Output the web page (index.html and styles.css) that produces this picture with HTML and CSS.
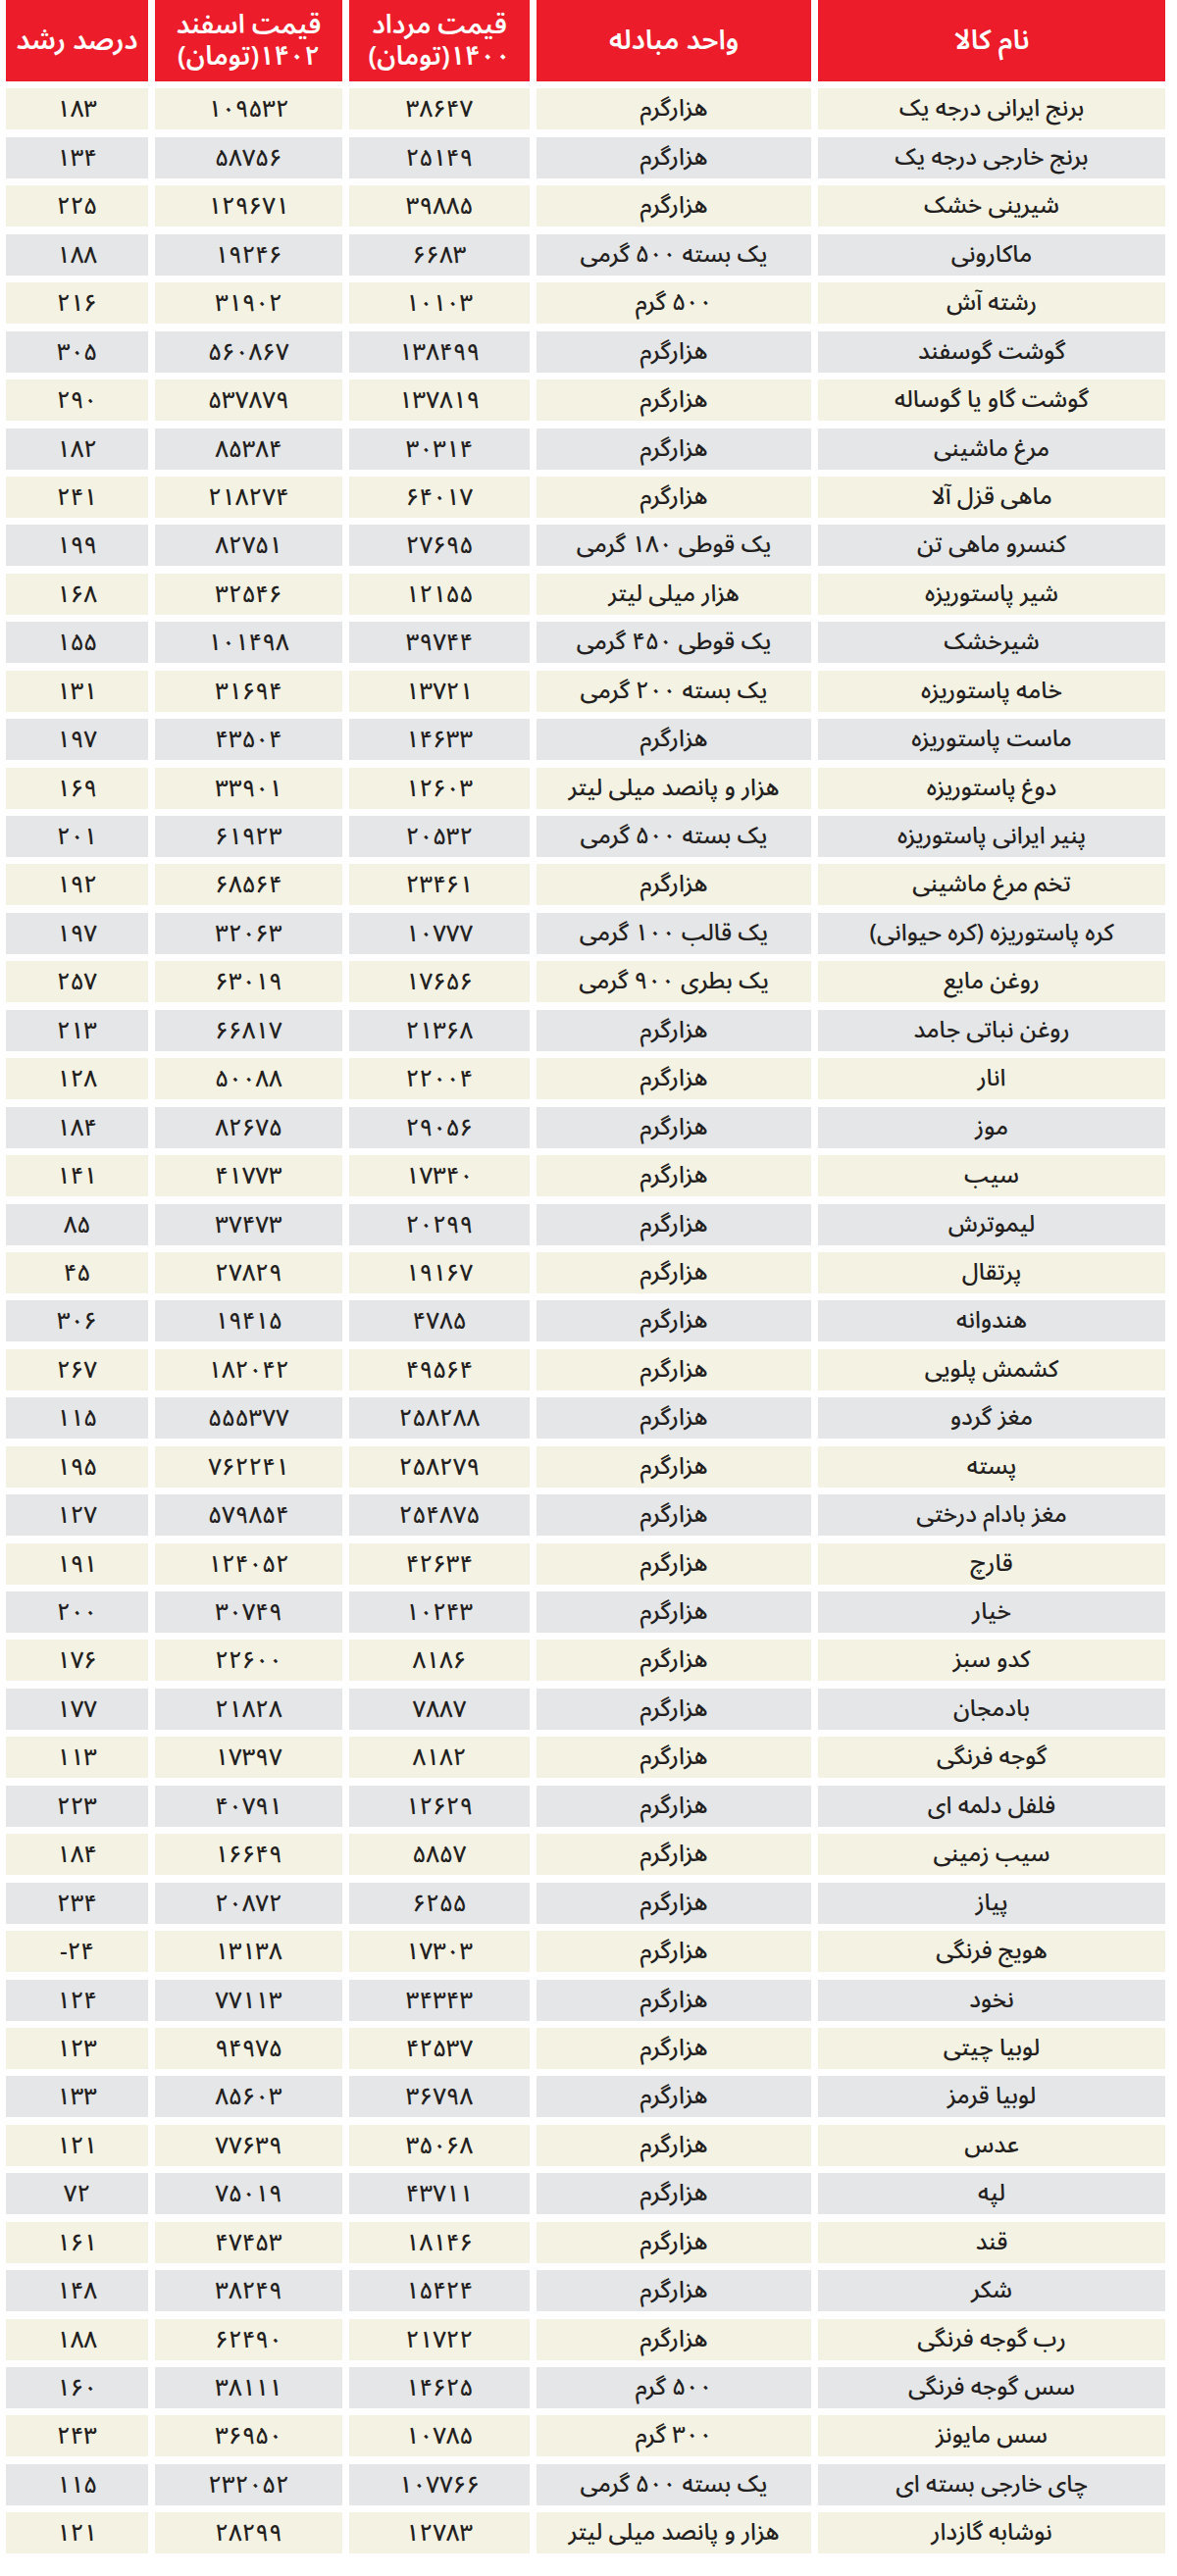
FILE: index.html
```html
<!DOCTYPE html>
<html lang="fa" dir="rtl">
<head>
<meta charset="utf-8">
<title>مقایسه قیمت کالاها</title>
<link rel="stylesheet" href="styles.css">
</head>
<body>
<main class="sheet">
  <div class="row head">
    <div class="cell">نام کالا</div>
    <div class="cell">واحد مبادله</div>
    <div class="cell two"><span>قیمت مرداد</span><span>۱۴۰۰(تومان)</span></div>
    <div class="cell two"><span>قیمت اسفند</span><span>۱۴۰۲(تومان)</span></div>
    <div class="cell">درصد رشد</div>
  </div>
  <div class="row"><div class="cell">برنج ایرانی درجه یک</div><div class="cell">هزارگرم</div><div class="cell num">۳۸۶۴۷</div><div class="cell num">۱۰۹۵۳۲</div><div class="cell num">۱۸۳</div></div>
  <div class="row"><div class="cell">برنج خارجی درجه یک</div><div class="cell">هزارگرم</div><div class="cell num">۲۵۱۴۹</div><div class="cell num">۵۸۷۵۶</div><div class="cell num">۱۳۴</div></div>
  <div class="row"><div class="cell">شیرینی خشک</div><div class="cell">هزارگرم</div><div class="cell num">۳۹۸۸۵</div><div class="cell num">۱۲۹۶۷۱</div><div class="cell num">۲۲۵</div></div>
  <div class="row"><div class="cell">ماکارونی</div><div class="cell">یک بسته ۵۰۰ گرمی</div><div class="cell num">۶۶۸۳</div><div class="cell num">۱۹۲۴۶</div><div class="cell num">۱۸۸</div></div>
  <div class="row"><div class="cell">رشته آش</div><div class="cell">۵۰۰ گرم</div><div class="cell num">۱۰۱۰۳</div><div class="cell num">۳۱۹۰۲</div><div class="cell num">۲۱۶</div></div>
  <div class="row"><div class="cell">گوشت گوسفند</div><div class="cell">هزارگرم</div><div class="cell num">۱۳۸۴۹۹</div><div class="cell num">۵۶۰۸۶۷</div><div class="cell num">۳۰۵</div></div>
  <div class="row"><div class="cell">گوشت گاو یا گوساله</div><div class="cell">هزارگرم</div><div class="cell num">۱۳۷۸۱۹</div><div class="cell num">۵۳۷۸۷۹</div><div class="cell num">۲۹۰</div></div>
  <div class="row"><div class="cell">مرغ ماشینی</div><div class="cell">هزارگرم</div><div class="cell num">۳۰۳۱۴</div><div class="cell num">۸۵۳۸۴</div><div class="cell num">۱۸۲</div></div>
  <div class="row"><div class="cell">ماهی قزل آلا</div><div class="cell">هزارگرم</div><div class="cell num">۶۴۰۱۷</div><div class="cell num">۲۱۸۲۷۴</div><div class="cell num">۲۴۱</div></div>
  <div class="row"><div class="cell">کنسرو ماهی تن</div><div class="cell">یک قوطی ۱۸۰ گرمی</div><div class="cell num">۲۷۶۹۵</div><div class="cell num">۸۲۷۵۱</div><div class="cell num">۱۹۹</div></div>
  <div class="row"><div class="cell">شیر پاستوریزه</div><div class="cell">هزار میلی لیتر</div><div class="cell num">۱۲۱۵۵</div><div class="cell num">۳۲۵۴۶</div><div class="cell num">۱۶۸</div></div>
  <div class="row"><div class="cell">شیرخشک</div><div class="cell">یک قوطی ۴۵۰ گرمی</div><div class="cell num">۳۹۷۴۴</div><div class="cell num">۱۰۱۴۹۸</div><div class="cell num">۱۵۵</div></div>
  <div class="row"><div class="cell">خامه پاستوریزه</div><div class="cell">یک بسته ۲۰۰ گرمی</div><div class="cell num">۱۳۷۲۱</div><div class="cell num">۳۱۶۹۴</div><div class="cell num">۱۳۱</div></div>
  <div class="row"><div class="cell">ماست پاستوریزه</div><div class="cell">هزارگرم</div><div class="cell num">۱۴۶۳۳</div><div class="cell num">۴۳۵۰۴</div><div class="cell num">۱۹۷</div></div>
  <div class="row"><div class="cell">دوغ پاستوریزه</div><div class="cell">هزار و پانصد میلی لیتر</div><div class="cell num">۱۲۶۰۳</div><div class="cell num">۳۳۹۰۱</div><div class="cell num">۱۶۹</div></div>
  <div class="row"><div class="cell">پنیر ایرانی پاستوریزه</div><div class="cell">یک بسته ۵۰۰ گرمی</div><div class="cell num">۲۰۵۳۲</div><div class="cell num">۶۱۹۲۳</div><div class="cell num">۲۰۱</div></div>
  <div class="row"><div class="cell">تخم مرغ ماشینی</div><div class="cell">هزارگرم</div><div class="cell num">۲۳۴۶۱</div><div class="cell num">۶۸۵۶۴</div><div class="cell num">۱۹۲</div></div>
  <div class="row"><div class="cell">کره پاستوریزه (کره حیوانی)</div><div class="cell">یک قالب ۱۰۰ گرمی</div><div class="cell num">۱۰۷۷۷</div><div class="cell num">۳۲۰۶۳</div><div class="cell num">۱۹۷</div></div>
  <div class="row"><div class="cell">روغن مایع</div><div class="cell">یک بطری ۹۰۰ گرمی</div><div class="cell num">۱۷۶۵۶</div><div class="cell num">۶۳۰۱۹</div><div class="cell num">۲۵۷</div></div>
  <div class="row"><div class="cell">روغن نباتی جامد</div><div class="cell">هزارگرم</div><div class="cell num">۲۱۳۶۸</div><div class="cell num">۶۶۸۱۷</div><div class="cell num">۲۱۳</div></div>
  <div class="row"><div class="cell">انار</div><div class="cell">هزارگرم</div><div class="cell num">۲۲۰۰۴</div><div class="cell num">۵۰۰۸۸</div><div class="cell num">۱۲۸</div></div>
  <div class="row"><div class="cell">موز</div><div class="cell">هزارگرم</div><div class="cell num">۲۹۰۵۶</div><div class="cell num">۸۲۶۷۵</div><div class="cell num">۱۸۴</div></div>
  <div class="row"><div class="cell">سیب</div><div class="cell">هزارگرم</div><div class="cell num">۱۷۳۴۰</div><div class="cell num">۴۱۷۷۳</div><div class="cell num">۱۴۱</div></div>
  <div class="row"><div class="cell">لیموترش</div><div class="cell">هزارگرم</div><div class="cell num">۲۰۲۹۹</div><div class="cell num">۳۷۴۷۳</div><div class="cell num">۸۵</div></div>
  <div class="row"><div class="cell">پرتقال</div><div class="cell">هزارگرم</div><div class="cell num">۱۹۱۶۷</div><div class="cell num">۲۷۸۲۹</div><div class="cell num">۴۵</div></div>
  <div class="row"><div class="cell">هندوانه</div><div class="cell">هزارگرم</div><div class="cell num">۴۷۸۵</div><div class="cell num">۱۹۴۱۵</div><div class="cell num">۳۰۶</div></div>
  <div class="row"><div class="cell">کشمش پلویی</div><div class="cell">هزارگرم</div><div class="cell num">۴۹۵۶۴</div><div class="cell num">۱۸۲۰۴۲</div><div class="cell num">۲۶۷</div></div>
  <div class="row"><div class="cell">مغز گردو</div><div class="cell">هزارگرم</div><div class="cell num">۲۵۸۲۸۸</div><div class="cell num">۵۵۵۳۷۷</div><div class="cell num">۱۱۵</div></div>
  <div class="row"><div class="cell">پسته</div><div class="cell">هزارگرم</div><div class="cell num">۲۵۸۲۷۹</div><div class="cell num">۷۶۲۲۴۱</div><div class="cell num">۱۹۵</div></div>
  <div class="row"><div class="cell">مغز بادام درختی</div><div class="cell">هزارگرم</div><div class="cell num">۲۵۴۸۷۵</div><div class="cell num">۵۷۹۸۵۴</div><div class="cell num">۱۲۷</div></div>
  <div class="row"><div class="cell">قارچ</div><div class="cell">هزارگرم</div><div class="cell num">۴۲۶۳۴</div><div class="cell num">۱۲۴۰۵۲</div><div class="cell num">۱۹۱</div></div>
  <div class="row"><div class="cell">خیار</div><div class="cell">هزارگرم</div><div class="cell num">۱۰۲۴۳</div><div class="cell num">۳۰۷۴۹</div><div class="cell num">۲۰۰</div></div>
  <div class="row"><div class="cell">کدو سبز</div><div class="cell">هزارگرم</div><div class="cell num">۸۱۸۶</div><div class="cell num">۲۲۶۰۰</div><div class="cell num">۱۷۶</div></div>
  <div class="row"><div class="cell">بادمجان</div><div class="cell">هزارگرم</div><div class="cell num">۷۸۸۷</div><div class="cell num">۲۱۸۲۸</div><div class="cell num">۱۷۷</div></div>
  <div class="row"><div class="cell">گوجه فرنگی</div><div class="cell">هزارگرم</div><div class="cell num">۸۱۸۲</div><div class="cell num">۱۷۳۹۷</div><div class="cell num">۱۱۳</div></div>
  <div class="row"><div class="cell">فلفل دلمه ای</div><div class="cell">هزارگرم</div><div class="cell num">۱۲۶۲۹</div><div class="cell num">۴۰۷۹۱</div><div class="cell num">۲۲۳</div></div>
  <div class="row"><div class="cell">سیب زمینی</div><div class="cell">هزارگرم</div><div class="cell num">۵۸۵۷</div><div class="cell num">۱۶۶۴۹</div><div class="cell num">۱۸۴</div></div>
  <div class="row"><div class="cell">پیاز</div><div class="cell">هزارگرم</div><div class="cell num">۶۲۵۵</div><div class="cell num">۲۰۸۷۲</div><div class="cell num">۲۳۴</div></div>
  <div class="row"><div class="cell">هویج فرنگی</div><div class="cell">هزارگرم</div><div class="cell num">۱۷۳۰۳</div><div class="cell num">۱۳۱۳۸</div><div class="cell num">-۲۴</div></div>
  <div class="row"><div class="cell">نخود</div><div class="cell">هزارگرم</div><div class="cell num">۳۴۳۴۳</div><div class="cell num">۷۷۱۱۳</div><div class="cell num">۱۲۴</div></div>
  <div class="row"><div class="cell">لوبیا چیتی</div><div class="cell">هزارگرم</div><div class="cell num">۴۲۵۳۷</div><div class="cell num">۹۴۹۷۵</div><div class="cell num">۱۲۳</div></div>
  <div class="row"><div class="cell">لوبیا قرمز</div><div class="cell">هزارگرم</div><div class="cell num">۳۶۷۹۸</div><div class="cell num">۸۵۶۰۳</div><div class="cell num">۱۳۳</div></div>
  <div class="row"><div class="cell">عدس</div><div class="cell">هزارگرم</div><div class="cell num">۳۵۰۶۸</div><div class="cell num">۷۷۶۳۹</div><div class="cell num">۱۲۱</div></div>
  <div class="row"><div class="cell">لپه</div><div class="cell">هزارگرم</div><div class="cell num">۴۳۷۱۱</div><div class="cell num">۷۵۰۱۹</div><div class="cell num">۷۲</div></div>
  <div class="row"><div class="cell">قند</div><div class="cell">هزارگرم</div><div class="cell num">۱۸۱۴۶</div><div class="cell num">۴۷۴۵۳</div><div class="cell num">۱۶۱</div></div>
  <div class="row"><div class="cell">شکر</div><div class="cell">هزارگرم</div><div class="cell num">۱۵۴۲۴</div><div class="cell num">۳۸۲۴۹</div><div class="cell num">۱۴۸</div></div>
  <div class="row"><div class="cell">رب گوجه فرنگی</div><div class="cell">هزارگرم</div><div class="cell num">۲۱۷۲۲</div><div class="cell num">۶۲۴۹۰</div><div class="cell num">۱۸۸</div></div>
  <div class="row"><div class="cell">سس گوجه فرنگی</div><div class="cell">۵۰۰ گرم</div><div class="cell num">۱۴۶۲۵</div><div class="cell num">۳۸۱۱۱</div><div class="cell num">۱۶۰</div></div>
  <div class="row"><div class="cell">سس مایونز</div><div class="cell">۳۰۰ گرم</div><div class="cell num">۱۰۷۸۵</div><div class="cell num">۳۶۹۵۰</div><div class="cell num">۲۴۳</div></div>
  <div class="row"><div class="cell">چای خارجی بسته ای</div><div class="cell">یک بسته ۵۰۰ گرمی</div><div class="cell num">۱۰۷۷۶۶</div><div class="cell num">۲۳۲۰۵۲</div><div class="cell num">۱۱۵</div></div>
  <div class="row"><div class="cell">نوشابه گازدار</div><div class="cell">هزار و پانصد میلی لیتر</div><div class="cell num">۱۲۷۸۳</div><div class="cell num">۲۸۲۹۹</div><div class="cell num">۱۲۱</div></div>
</main>
</body>
</html>
```
FILE: styles.css
```css
* { box-sizing: border-box; }

html, body {
  margin: 0;
  padding: 0;
  background: #ffffff;
}

body {
  font-family: "Noto Sans Arabic", "DejaVu Sans Condensed", "DejaVu Sans", sans-serif;
  font-stretch: condensed;
  color: #231f20;
}

.sheet {
  display: flex;
  flex-direction: column;
  gap: 7.45px;
  padding: 0 12px 19px 6px;
}

.row {
  display: grid;
  grid-template-columns: 354px 280px 184px 191px 1fr;
  column-gap: 7px;
  height: 42px;
}

.row:nth-child(even) .cell { background: #f4f2e3; }
.row:nth-child(odd) .cell { background: #e5e6e8; }

.cell {
  display: flex;
  align-items: center;
  justify-content: center;
  text-align: center;
  font-size: 24px;
  font-weight: 500;
  line-height: 1;
  white-space: nowrap;
}

.num {
  direction: ltr;
  font-size: 24px;
  padding-top: 2px;
}

.row.head {
  height: 83px;
}

.row.head .cell {
  background: #ec1c2a;
  color: #ffffff;
  font-size: 28px;
  font-weight: 600;
}

.row.head .cell.two {
  flex-direction: column;
  gap: 0;
  font-size: 27px;
}

.row.head .cell.two span {
  display: block;
  line-height: 32px;
}
```
